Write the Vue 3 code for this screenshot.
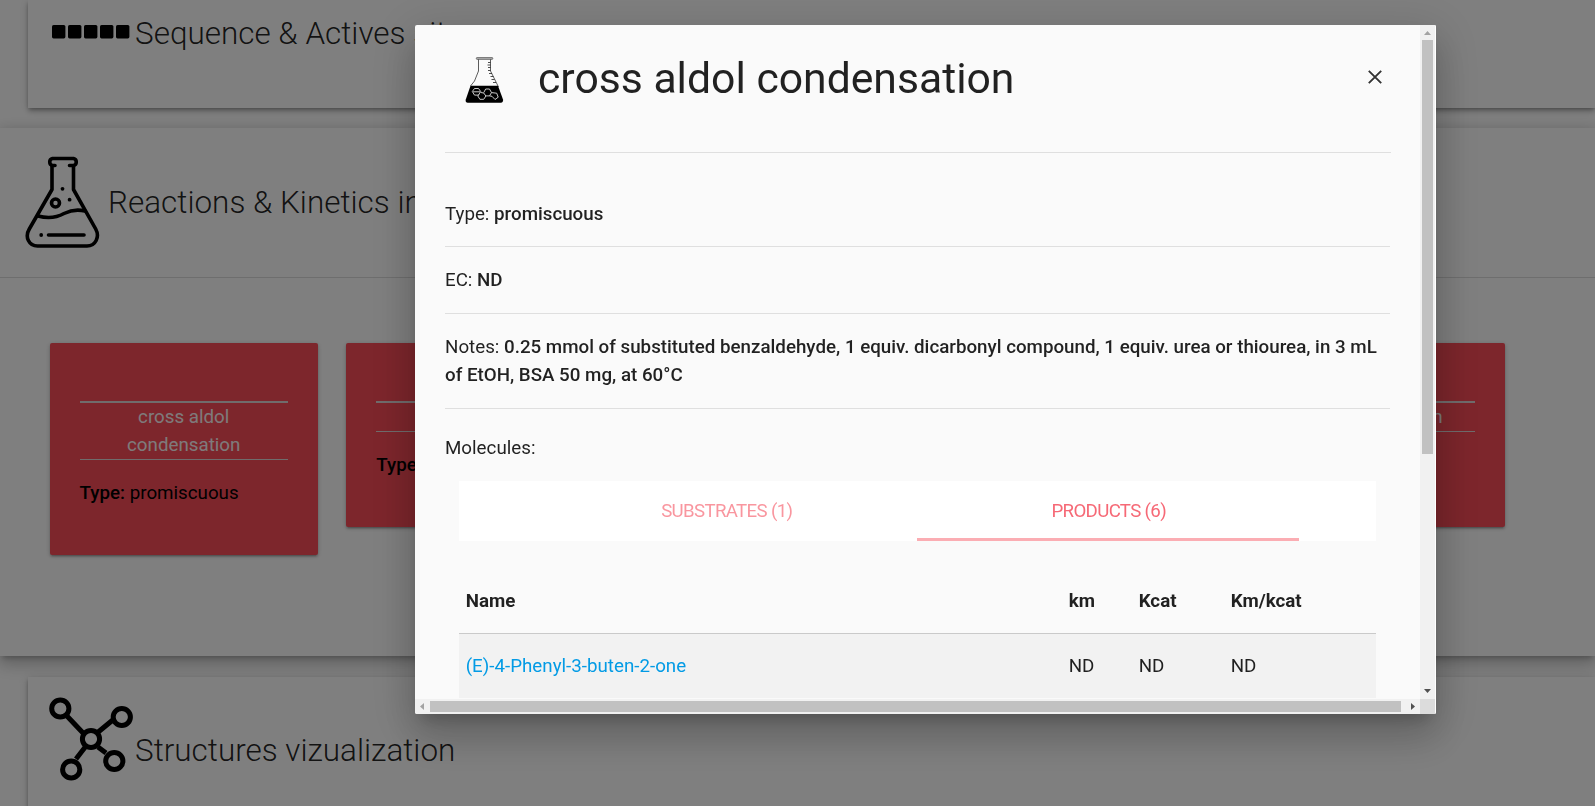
<script setup>
const reactions = [
  { name: 'cross aldol condensation', type: 'promiscuous' },
  { name: 'aldol addition', type: 'promiscuous' },
  { name: 'Henry reaction', type: 'promiscuous' },
  { name: 'Biginelli reaction', type: 'promiscuous' },
  { name: 'Mannich reaction', type: '' },
]
const infos = [
  { label: 'Type:', value: 'promiscuous' },
  { label: 'EC:', value: 'ND' },
  {
    label: 'Notes:',
    value:
      '0.25 mmol of substituted benzaldehyde, 1 equiv. dicarbonyl compound, 1 equiv. urea or thiourea, in 3 mL of EtOH, BSA 50 mg, at 60°C',
  },
]
const products = [{ name: '(E)-4-Phenyl-3-buten-2-one', km: 'ND', kcat: 'ND', ratio: 'ND' }]
</script>

<template>
  <div class="page">
    <section class="panel panel-sequence">
      <svg class="squares" width="78" height="14" viewBox="0 0 78 14">
        <rect v-for="i in 5" :key="i" :x="(i - 1) * 16" y="0" width="13.4" height="13.4" rx="1.6" />
      </svg>
      <h4>Sequence &amp; Actives sites</h4>
    </section>

    <section class="reactions">
      <header>
        <svg class="flask" width="76" height="92" viewBox="0 0 76 92" fill="none" stroke="#000" stroke-width="3.6" stroke-linecap="round" stroke-linejoin="round">
          <path d="M30 9.500H27.500A3.600 3.600 0 0 1 27.500 2.500H48.500A3.600 3.600 0 0 1 48.500 9.500H44.500" />
          <path d="M27 10V33.500L4.300 73C-.5 81 4 90 12.500 90H62C70.500 90 75 81 70.700 73L48.500 33.500V10" />
          <path d="M13 60C22 62.500 31 62 39 57.500C46 54 52 53 60 55" />
          <circle cx="30.500" cy="47" r="4" />
          <path d="M23.500 79H59" />
          <g fill="#000" stroke="none">
            <circle cx="37.500" cy="32.800" r="1.900" /><circle cx="44.600" cy="43.700" r="1.900" /><circle cx="16.200" cy="79" r="1.900" />
          </g>
        </svg>
        <h4>Reactions &amp; Kinetics informations</h4>
      </header>
      <div class="cards">
        <article v-for="r in reactions" :key="r.name" class="card">
          <div class="card-name">{{ r.name }}</div>
          <p><b>Type:</b> {{ r.type }}</p>
        </article>
      </div>
    </section>

    <section class="panel panel-structures">
      <svg width="86" height="86" viewBox="0 0 86 86" fill="none" stroke="#000" stroke-width="5">
        <path d="M18 19L36 38M49 37L66 23M38 50L28 63M50 51L58 57" />
        <circle cx="12.300" cy="12.500" r="8.600" /><circle cx="73.800" cy="21" r="8.600" />
        <circle cx="43" cy="43" r="8.600" /><circle cx="23.200" cy="73.500" r="8.600" /><circle cx="66.300" cy="65" r="8.600" />
      </svg>
      <h4>Structures vizualization</h4>
    </section>
  </div>

  <div class="overlay">
    <div class="modal">
      <div class="viewport">
        <header class="modal-head">
          <svg class="beaker" width="39" height="46" viewBox="0 0 39 46" fill="none">
            <path d="M13.500 2V14L9.500 24L5.500 29M25.500 2V14L33.500 30" stroke="#333" stroke-width=".8" />
            <path d="M23 5.500h2.500M22.500 8h3M23 10.500h2.500M23 13.500h2.500M24 16.500h3M25.500 19.500h3M26.500 22.500h3M28 25.500h3" stroke="#222" stroke-width=".8" />
            <rect x="11.300" y=".5" width="16.500" height="1.900" rx=".8" fill="#aaa" stroke="#444" stroke-width=".6" />
            <path d="M5.500 28.700H33L38.200 43Q38 45.700 36.200 45.700H2.700Q.500 45.700.6 43Z" fill="#000" />
            <g stroke="#ddd" stroke-width=".9">
              <path d="M9.500 31.500h4l2.200 3-2.200 3.600h-4l-2.200-3.600zM8 34.800h7M15.700 35.500l3 .5 2.200 3-2.200 3.300h-3.800L12.800 39l.9-1.500M18.700 35.700l2-3.700h3.800l2 3.600-2 3.300h-3.600M26.500 35.600l5.200.6 1.500 4-3.200 2.300-3-3.200-2.500-.4" />
            </g>
          </svg>
          <h3>cross aldol condensation</h3>
          <svg class="close" width="14" height="14" viewBox="0 0 14 14"><path d="M.8.8L13.200 13.200M13.200.8L.8 13.200" stroke="#333" stroke-width="1.900" /></svg>
        </header>
        <div class="infos">
          <div v-for="i in infos" :key="i.label" class="info">{{ i.label }} <b>{{ i.value }}</b></div>
        </div>
        <div class="molecules">Molecules:</div>
        <div class="detail">
          <nav class="tabs">
            <a class="tab">SUBSTRATES (1)</a>
            <a class="tab active">PRODUCTS (6)</a>
          </nav>
          <div class="table">
            <div class="tr th"><span>Name</span><span>km</span><span>Kcat</span><span>Km/kcat</span></div>
            <div v-for="p in products" :key="p.name" class="tr td">
              <a>{{ p.name }}</a><span>{{ p.km }}</span><span>{{ p.kcat }}</span><span>{{ p.ratio }}</span>
            </div>
          </div>
        </div>
      </div>
      <div class="bar-v">
        <svg width="15" height="15"><path d="M4 10L7.500 6L11 10Z" fill="#a3a3a3" /></svg>
        <i class="thumb"></i>
        <svg class="end" width="15" height="15"><path d="M4 5L7.500 9L11 5Z" fill="#505050" /></svg>
      </div>
      <div class="bar-h">
        <svg width="15" height="15"><path d="M9 4L5 7.500L9 11Z" fill="#a3a3a3" /></svg>
        <i class="thumb"></i>
        <svg class="end" width="15" height="15"><path d="M6 4L10 7.500L6 11Z" fill="#505050" /></svg>
      </div>
      <div class="corner"></div>
    </div>
  </div>
</template>

<style>
html, body { margin: 0; height: 100%; overflow: hidden; background: #fff; }
</style>

<style scoped>
* { box-sizing: border-box; }
.page {
  width: 1595px; height: 806px; overflow: hidden;
  font-family: Roboto, "Liberation Sans", sans-serif; font-size: 18.75px; line-height: 28px;
  color: rgba(0, 0, 0, .87);
}
h4 { margin: 0; font-weight: 300; font-size: 31.45px; line-height: 36px; white-space: nowrap; }
.panel {
  margin-left: 28px; display: flex; background: #fff;
  box-shadow: 0 4px 5px 0 rgba(0,0,0,.14), 0 1px 10px 0 rgba(0,0,0,.12), 0 2px 4px -1px rgba(0,0,0,.3);
}
.panel-sequence { height: 108px; padding: 15px 0 0 24px; gap: 5px; }
.panel-sequence h4 { margin-top: 1px; }
.squares { margin-top: 10px; }
.reactions {
  margin-top: 20px; height: 528px; background: #fff;
  box-shadow: 0 8px 17px 2px rgba(0,0,0,.14), 0 3px 14px 2px rgba(0,0,0,.12), 0 5px 5px -3px rgba(0,0,0,.2);
}
.reactions header { height: 150px; display: flex; padding: 28px 0 0 25px; gap: 7px; border-bottom: 1px solid #ddd; }
.reactions header h4 { margin-top: 29px; }
.cards { width: 1455px; margin: 65px 0 0 49.6px; display: grid; grid-template-columns: repeat(5, 1fr); gap: 28.4px; align-items: start; }
.card {
  padding: 58px 30px 56px; background: #fa4c58; border-radius: 2px; color: #000;
  box-shadow: 0 2px 2px 0 rgba(0,0,0,.14), 0 3px 1px -2px rgba(0,0,0,.12), 0 1px 5px 0 rgba(0,0,0,.2);
}
.card-name { border-top: 2px solid #e0e0e0; border-bottom: 1px solid #e0e0e0; text-align: center; color: #fff; padding: 0 20px; opacity: .95; }
.card p { margin: 19px 0 0; height: 20px; line-height: 28px; }
.card b { font-weight: 500; }
.panel-structures { margin-top: 21px; height: 140px; padding: 19px 0 0 20px; gap: 1px; }
.panel-structures h4 { margin-top: 37px; }

.overlay { position: fixed; inset: 0; background: rgba(0, 0, 0, .5); }
.modal {
  width: 1021px; height: 689px; margin: 25px 0 0 415px; background: #fafafa; border-radius: 2px; overflow: hidden;
  display: grid; grid-template-columns: 1005px 16px; grid-template-rows: 674px 15px;
  box-shadow: 0 24px 38px 3px rgba(0,0,0,.14), 0 9px 46px 8px rgba(0,0,0,.12), 0 11px 15px -7px rgba(0,0,0,.2);
  font-family: Roboto, "Liberation Sans", sans-serif; font-size: 18.75px; line-height: 28px; color: rgba(0, 0, 0, .87);
}
.viewport { overflow: hidden; padding-left: 30px; }
.modal-head { width: 946px; height: 128px; display: flex; padding-left: 20px; border-bottom: 1px solid #dfdfdf; }
.beaker { margin-top: 32px; }
h3 { margin: 27px 0 0 34px; font-weight: 400; font-size: 42.7px; line-height: 52px; white-space: nowrap; }
.close { margin: 45px 9px 0 auto; }
.infos { width: 945px; padding-top: 28px; }
.info { padding: 19px 0; border-bottom: 1px solid #dfdfdf; }
.info:first-child { padding-bottom: 18px; }
.info b { font-weight: 500; }
.molecules { margin-top: 25px; }
.detail { width: 917px; margin: 19px 0 0 14px; }
.tabs { height: 60px; background: #fff; padding: 0 77px 0 76px; display: flex; }
.tab { flex: 1; padding-left: 1.5px; text-align: center; line-height: 60px; font-size: 18.67px; letter-spacing: -.65px; color: rgba(246, 105, 118, .7); }
.tab.active { color: #f66976; border-bottom: 3px solid #fbadb3; }
.tr { display: grid; grid-template-columns: 603px 70px 92px 1fr; padding-left: 6.700px; height: 65px; align-items: center; }
.table { margin-top: 28px; }
.th { font-weight: 700; border-bottom: 1px solid #cacaca; }
.td { background: #f2f2f2; height: 64px; }
.td a { color: #039be5; }
.bar-v { background: #f1f1f1; border-right: 1px solid #fff; display: flex; flex-direction: column; }
.bar-v .thumb { width: 11px; height: 414px; margin-left: 2px; background: #c1c1c1; }
.bar-v .end { margin-top: auto; }
.bar-h { background: #f1f1f1; display: flex; }
.bar-h .thumb { width: 971px; height: 11px; margin-top: 2px; background: #c1c1c1; }
.bar-h .end { margin-left: auto; }
.corner { background: #dcdcdc; border-right: 1px solid #fff; }
svg { display: block; flex: none; }
</style>
